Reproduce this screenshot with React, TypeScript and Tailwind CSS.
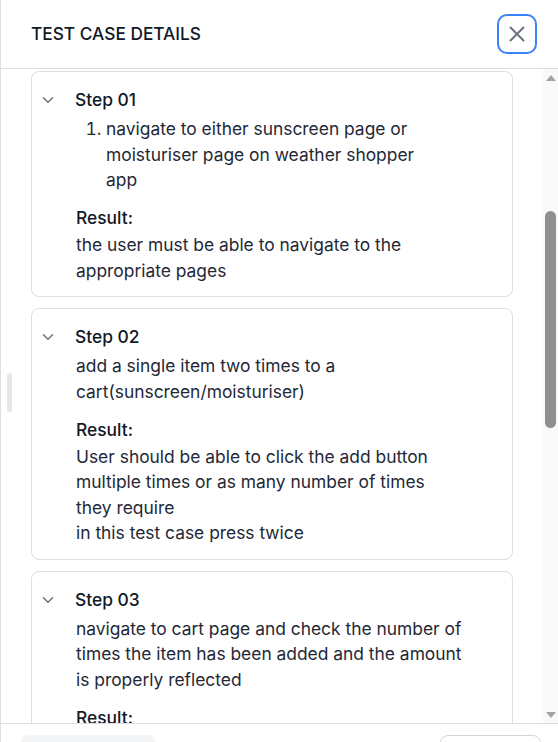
import React from "react";

type Step = {
  id: string;
  title: string;
  list?: string[];
  text?: string;
  result: string;
};

const STEPS: Step[] = [
  {
    id: "s1",
    title: "Step 01",
    list: ["navigate to either sunscreen page or moisturiser page on weather shopper app"],
    result: "the user must be able to navigate to the appropriate pages",
  },
  {
    id: "s2",
    title: "Step 02",
    text: "add a single item two times to a cart(sunscreen/moisturiser)",
    result:
      "User should be able to click the add button multiple times or as many number of times\nthey require\nin this test case press twice",
  },
  {
    id: "s3",
    title: "Step 03",
    text: "navigate to cart page and check the number of times the item has been added and the amount is properly reflected",
    result: "the amount should be reflected correctly",
  },
];

function Chevron() {
  return (
    <svg width="12" height="8" viewBox="0 0 12 8" fill="none" className="mt-[1px]">
      <path d="M1.5 1.75 6 6.25l4.5-4.5" stroke="#6b7280" strokeWidth="1.5" strokeLinecap="round" strokeLinejoin="round" />
    </svg>
  );
}

function StepCard({ step }: { step: Step }) {
  return (
    <div className="shrink-0 rounded-lg border border-[#dcdfe4] bg-white pt-[15px] pb-[13px] pl-[10px] pr-[46px]">
      <div className="flex">
        <div className="flex h-[25.5px] w-[33px] shrink-0 items-center">
          <Chevron />
        </div>
        <div className="min-w-0 flex-1 text-[17.4px] leading-[25.5px] text-[#1f2937]">
          <div className="font-medium text-[#111827]">{step.title}</div>
          <div className="mt-[3.5px] pl-[1px]">
            {step.list ? (
              <ol className="list-decimal pl-[30px] pr-[31px]">
                {step.list.map((item, i) => (
                  <li key={i}>{item}</li>
                ))}
              </ol>
            ) : (
              <p>{step.text}</p>
            )}
          </div>
          <div className="mt-[12.5px] pl-[1px] font-medium text-[#111827]">Result:</div>
          <p className="mt-[1.5px] whitespace-pre-line pl-[1px]">{step.result}</p>
        </div>
      </div>
    </div>
  );
}

export default function App() {
  return (
    <div
      className="relative flex h-[742px] w-[558px] flex-col overflow-hidden border-l border-[#dcdfe4] bg-white"
      style={{ fontFamily: "Inter, 'Noto Sans', sans-serif" }}
    >
      <div className="flex h-[69px] shrink-0 items-center justify-between border-b border-[#dcdfe4] pl-[30px] pr-[21px]">
        <h1 className="text-[17.3px] font-medium uppercase text-[#111827]">Test case details</h1>
        <button className="flex h-[40px] w-[40px] items-center justify-center rounded-[10px] border-2 border-[#3b82f6] bg-white">
          <svg width="16" height="16" viewBox="0 0 16 16" fill="none">
            <path d="M1.5 1.5l13 13M14.5 1.5l-13 13" stroke="#6b7280" strokeWidth="2" strokeLinecap="round" />
          </svg>
        </button>
      </div>

      <div className="flex min-h-0 flex-1">
        <div className="flex flex-1 flex-col gap-[11px] overflow-hidden pl-[30px] pr-[30px] pt-[2px]">
          {STEPS.map((step) => (
            <StepCard key={step.id} step={step} />
          ))}
        </div>
        <div className="flex w-[15px] shrink-0 flex-col bg-[#f9f9f9]">
          <div className="flex h-[17px] items-center justify-center">
            <div className="h-0 w-0 border-x-[5px] border-b-[6px] border-x-transparent border-b-[#a3a3a3]" />
          </div>
          <div className="flex-1 pt-[125px]">
            <div className="mx-auto h-[217px] w-[11px] rounded-full bg-[#8f8f8f]" />
          </div>
          <div className="flex h-[17px] items-center justify-center">
            <div className="h-0 w-0 border-x-[5px] border-t-[6px] border-x-transparent border-t-[#a3a3a3]" />
          </div>
        </div>
      </div>

      <div className="flex h-[19px] shrink-0 items-start justify-between border-t border-[#dcdfe4] pl-[20px] pr-[17px] pt-[11px]">
        <button className="h-[36px] w-[135px] rounded-lg bg-[#f3f4f6]" />
        <button className="h-[36px] w-[101px] rounded-lg border border-[#d1d5db] bg-white" />
      </div>

      <div className="absolute left-[6px] top-[373px] h-[39px] w-[5px] rounded-full bg-[#e5e7eb]" />
    </div>
  );
}
